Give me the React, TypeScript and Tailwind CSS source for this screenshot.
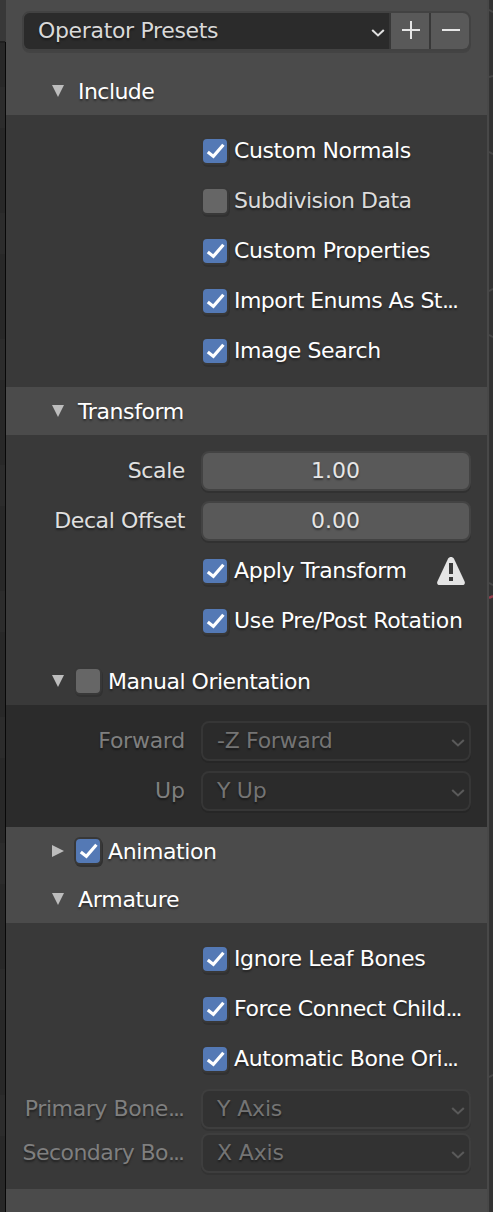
import type { ReactNode } from 'react';

const DOTS = '...';

const TRACKING: Record<string, string> = {
  'Operator Presets': 'tracking-[-0.33px]',
  Include: 'tracking-[-0.55px]',
  'Custom Normals': 'tracking-[-0.39px]',
  'Subdivision Data': 'tracking-[-0.5px]',
  'Custom Properties': 'tracking-[-0.37px]',
  'Import Enums As St...': 'tracking-[-0.55px]',
  'Use Pre/Post Rotation': 'tracking-[-0.33px]',
  'Manual Orientation': 'tracking-[-0.48px]',
  Forward: 'tracking-[-0.25px]',
  '-Z Forward': 'tracking-[-0.3px]',
  Up: 'tracking-[0px]',
  'Y Up': 'tracking-[-0.3px]',
  Armature: 'tracking-[-0.25px]',
  'Force Connect Child...': 'tracking-[-0.45px]',
  'Secondary Bo...': 'tracking-[-0.55px]',
  'Y Axis': 'tracking-[-0.15px]',
  'X Axis': 'tracking-[-0.15px]',
};

function Label({ text }: { text: string }) {
  const cut = text.endsWith(DOTS);
  return (
    <span className={`whitespace-nowrap ${TRACKING[text] ?? 'tracking-[-0.4px]'}`}>
      {cut ? text.slice(0, -3) : text}
      {cut && <span className="mr-[2px] tracking-[-2px]">{DOTS}</span>}
    </span>
  );
}

function Checkbox({ checked = true }: { checked?: boolean }) {
  return (
    <span
      className={`block size-6 shrink-0 rounded-[4px] shadow-[0_0_0_2px_#383838,1px_2px_0_2px_#313131] ${
        checked ? 'bg-[#5479b5]' : 'bg-[#666666]'
      }`}
    >
      {checked && (
        <svg className="block" width="24" height="24" viewBox="0 0 24 24" fill="none">
          <path d="M4.8 12.9 10.4 17.4 20.4 5.7" stroke="#fff" strokeWidth="3.2" />
        </svg>
      )}
    </span>
  );
}

function Triangle({ open = true }: { open?: boolean }) {
  return (
    <svg className="block shrink-0" width="12" height="12" viewBox="0 0 12 12">
      <path d={open ? 'M0 0H12L6 12Z' : 'M0 0 12 6 0 12Z'} fill="#bdbdbd" />
    </svg>
  );
}

function Chevron({ color }: { color: string }) {
  return (
    <svg className="block shrink-0" width="14" height="8" viewBox="0 0 14 8" fill="none">
      <path d="M1.2 0.9 7 6.4 12.8 0.9" stroke={color} strokeWidth="2.1" />
    </svg>
  );
}

function Warning() {
  return (
    <svg className="mr-[22px] ml-auto block shrink-0" width="28" height="28" viewBox="0 0 28 28">
      <path d="M11 1.8C12.3-.5 15.7-.5 17 1.8L27.6 24.4C28.4 26.3 27.4 28 25.4 28H2.6C.6 28-.4 26.3.4 24.4Z" fill="#e4e4e4" />
      <path d="M12 6H16V17H12ZM12 20H16V24H12Z" fill="#393939" />
    </svg>
  );
}

function Header({ title, open = true, check }: { title: string; open?: boolean; check?: boolean }) {
  return (
    <div className="flex h-12 items-center pl-[46px] text-white">
      <Triangle open={open} />
      {check !== undefined && (
        <div className="-mr-[6px] ml-3">
          <Checkbox checked={check} />
        </div>
      )}
      <span className="ml-[14px] pt-[2px]">
        <Label text={title} />
      </span>
    </div>
  );
}

function Body({ children, dark = false }: { children: ReactNode; dark?: boolean }) {
  return (
    <div className={`flex flex-col gap-[10px] py-4 ${dark ? 'bg-[#2b2b2b]' : 'bg-[#393939]'}`}>{children}</div>
  );
}

function CheckRow({ text, checked = true, warn = false }: { text: string; checked?: boolean; warn?: boolean }) {
  return (
    <div className={`flex h-10 items-center pl-[197px] ${checked ? 'text-white' : 'text-[#dcdcdc]'}`}>
      <Checkbox checked={checked} />
      <span className="ml-[7px]">
        <Label text={text} />
      </span>
      {warn && <Warning />}
    </div>
  );
}

function FieldRow({ label, children, dim = false }: { label: string; children: ReactNode; dim?: boolean }) {
  return (
    <div className={`flex h-10 items-center justify-end pr-4 ${dim ? 'text-[#7f7f7f]' : 'text-[#e0e0e0]'}`}>
      <span className="mr-4">
        <Label text={label} />
      </span>
      {children}
    </div>
  );
}

function NumberField({ value }: { value: string }) {
  return (
    <div className="flex h-10 w-[270px] items-center justify-center rounded-lg border-2 border-[#434343] bg-[#595959] pr-px text-[#e6e6e6] shadow-[0_2px_0_#313131]">
      {value}
    </div>
  );
}

function SelectField({ value, dark = false }: { value: string; dark?: boolean }) {
  return (
    <div
      className={`flex h-10 w-[270px] items-center justify-between rounded-lg border-2 pr-1 pl-[14px] text-[#747474] ${
        dark
          ? 'border-[#363636] bg-[#2b2b2b] shadow-[0_2px_0_#262626]'
          : 'border-[#3e3e3e] bg-[#323232] shadow-[0_2px_0_#333333]'
      }`}
    >
      <Label text={value} />
      <span className="pt-1">
        <Chevron color="#5a5a5a" />
      </span>
    </div>
  );
}

function Presets() {
  return (
    <div className="h-[67px] pt-[11px] pl-4">
      <div className="flex h-10 w-[449px] overflow-hidden rounded-lg border-2 border-[#424242] bg-[#383838] shadow-[0_2px_0_#434343]">
        <div className="flex w-[365px] items-center justify-between bg-[#2b2b2b] pr-1 pl-[14px] text-[#d9d9d9]">
          <Label text="Operator Presets" />
          <span className="pt-1">
            <Chevron color="#e0e0e0" />
          </span>
        </div>
        <div className="ml-[2px] w-[38px] bg-[#595959] pt-2 pl-[11px]">
          <svg className="block" width="18" height="18" viewBox="0 0 18 18">
            <path d="M8 0H10V8H18V10H10V18H8V10H0V8H8Z" fill="#e6e6e6" />
          </svg>
        </div>
        <div className="ml-[2px] w-[38px] bg-[#595959] pt-2 pl-[11px]">
          <svg className="block" width="18" height="18" viewBox="0 0 18 18">
            <path d="M0 8H18V10H0Z" fill="#e6e6e6" />
          </svg>
        </div>
      </div>
    </div>
  );
}

export default function App() {
  return (
    <div className="flex h-[1212px] w-[493px] overflow-hidden bg-[#333333] font-['DejaVu_Sans',sans-serif] text-[22px] leading-7 [text-shadow:0_2px_2px_rgba(0,0,0,0.42)]">
      <div className="flex w-[5px] shrink-0 flex-col">
        <div className="h-[41px] bg-[#383838]" />
        <div className="h-[2px] bg-[#202020]" />
        <div className="grow bg-[#282828] bg-[repeating-linear-gradient(#282828_0px_44px,#2c2c2c_44px_85px,#282828_85px_126px)]" />
      </div>
      <div className="flex w-px shrink-0 flex-col">
        <div className="h-[42px] bg-[#383838]" />
        <div className="grow bg-[#080808]" />
      </div>
      <main className="w-[481px] shrink-0 bg-[#4b4b4b]">
        <Presets />
        <Header title="Include" />
        <Body>
          <CheckRow text="Custom Normals" />
          <CheckRow text="Subdivision Data" checked={false} />
          <CheckRow text="Custom Properties" />
          <CheckRow text="Import Enums As St..." />
          <CheckRow text="Image Search" />
        </Body>
        <Header title="Transform" />
        <Body>
          <FieldRow label="Scale">
            <NumberField value="1.00" />
          </FieldRow>
          <FieldRow label="Decal Offset">
            <NumberField value="0.00" />
          </FieldRow>
          <CheckRow text="Apply Transform" warn />
          <CheckRow text="Use Pre/Post Rotation" />
        </Body>
        <div className="bg-[#393939]">
          <Header title="Manual Orientation" check={false} />
        </div>
        <Body dark>
          <FieldRow label="Forward" dim>
            <SelectField value="-Z Forward" dark />
          </FieldRow>
          <FieldRow label="Up" dim>
            <SelectField value="Y Up" dark />
          </FieldRow>
        </Body>
        <Header title="Animation" open={false} check />
        <Header title="Armature" />
        <Body>
          <CheckRow text="Ignore Leaf Bones" />
          <CheckRow text="Force Connect Child..." />
          <CheckRow text="Automatic Bone Ori..." />
          <div className="flex flex-col gap-1">
            <FieldRow label="Primary Bone..." dim>
              <SelectField value="Y Axis" />
            </FieldRow>
            <FieldRow label="Secondary Bo..." dim>
              <SelectField value="X Axis" />
            </FieldRow>
          </div>
        </Body>
      </main>
      <div className="w-[2px] shrink-0 bg-[#484848]" />
      <svg className="block shrink-0" width="4" height="1212" viewBox="0 0 4 1212" fill="none">
        <path d="M0 10 4 12M0 77 4 76M0 152 4 154M0 291 4 289M0 335 4 337M0 583 4 585M0 1077 4 1075" stroke="#474747" strokeWidth="2" />
        <path d="M0 598 4 596" stroke="#963e4d" strokeWidth="2.5" />
      </svg>
    </div>
  );
}
